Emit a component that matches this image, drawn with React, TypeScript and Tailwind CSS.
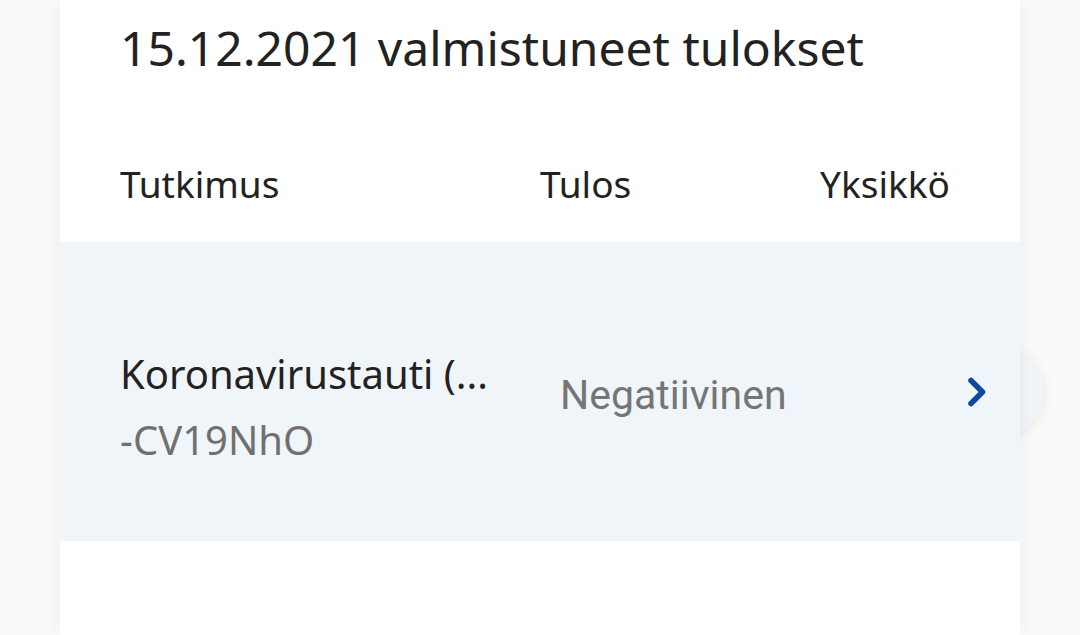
import React from 'react';

const sans = { fontFamily: '"Noto Sans", "Open Sans", sans-serif' };

const ChevronRight: React.FC = () => (
  <svg width="22" height="32" viewBox="0 0 22 32" fill="none">
    <path d="M5 4.5 L16.5 16 L5 27.5" stroke="#0b4aa2" strokeWidth="5.5" strokeLinecap="round" strokeLinejoin="round" />
  </svg>
);

export default function App() {
  return (
    <div className="min-h-screen h-[635px] overflow-hidden bg-[#fafafa] px-[60px]" style={sans}>
      <div className="relative h-full">
        {/* round button that sticks out of the card */}
        <div className="absolute left-[896px] top-[348px] h-[88px] w-[88px] rounded-full bg-[#f1f5fa] shadow-[0_2px_14px_rgba(0,0,0,0.08)]" />

        <div className="relative z-10 h-full bg-white shadow-[0_0_18px_rgba(0,0,0,0.06)]">
          <h1 className="px-[60px] pt-[20px] text-[48px] leading-[56px] font-normal text-[#222222]">
            15.12.2021 valmistuneet tulokset
          </h1>

          <div className="mt-[86px] grid grid-cols-[420px_280px_1fr] px-[60px] pb-[36px] text-[37px] leading-[44px] text-[#222222]">
            <span>Tutkimus</span>
            <span>Tulos</span>
            <span>Yksikkö</span>
          </div>

          <div className="flex h-[299px] items-center bg-[#f0f5fa] pl-[60px] pr-[32px]">
            <div className="mt-[30px] w-[380px] text-[40px] leading-[66px]">
              <div className="whitespace-nowrap text-[#222222]">Koronavirustauti (...</div>
              <div className="text-[#707070]">-CV19NhO</div>
            </div>
            <div className="ml-[60px] mt-[8px] flex-1 text-[41px] text-[#757575]" style={{ fontFamily: 'Roboto, sans-serif' }}>
              Negatiivinen
            </div>
            <ChevronRight />
          </div>
        </div>
      </div>
    </div>
  );
}
